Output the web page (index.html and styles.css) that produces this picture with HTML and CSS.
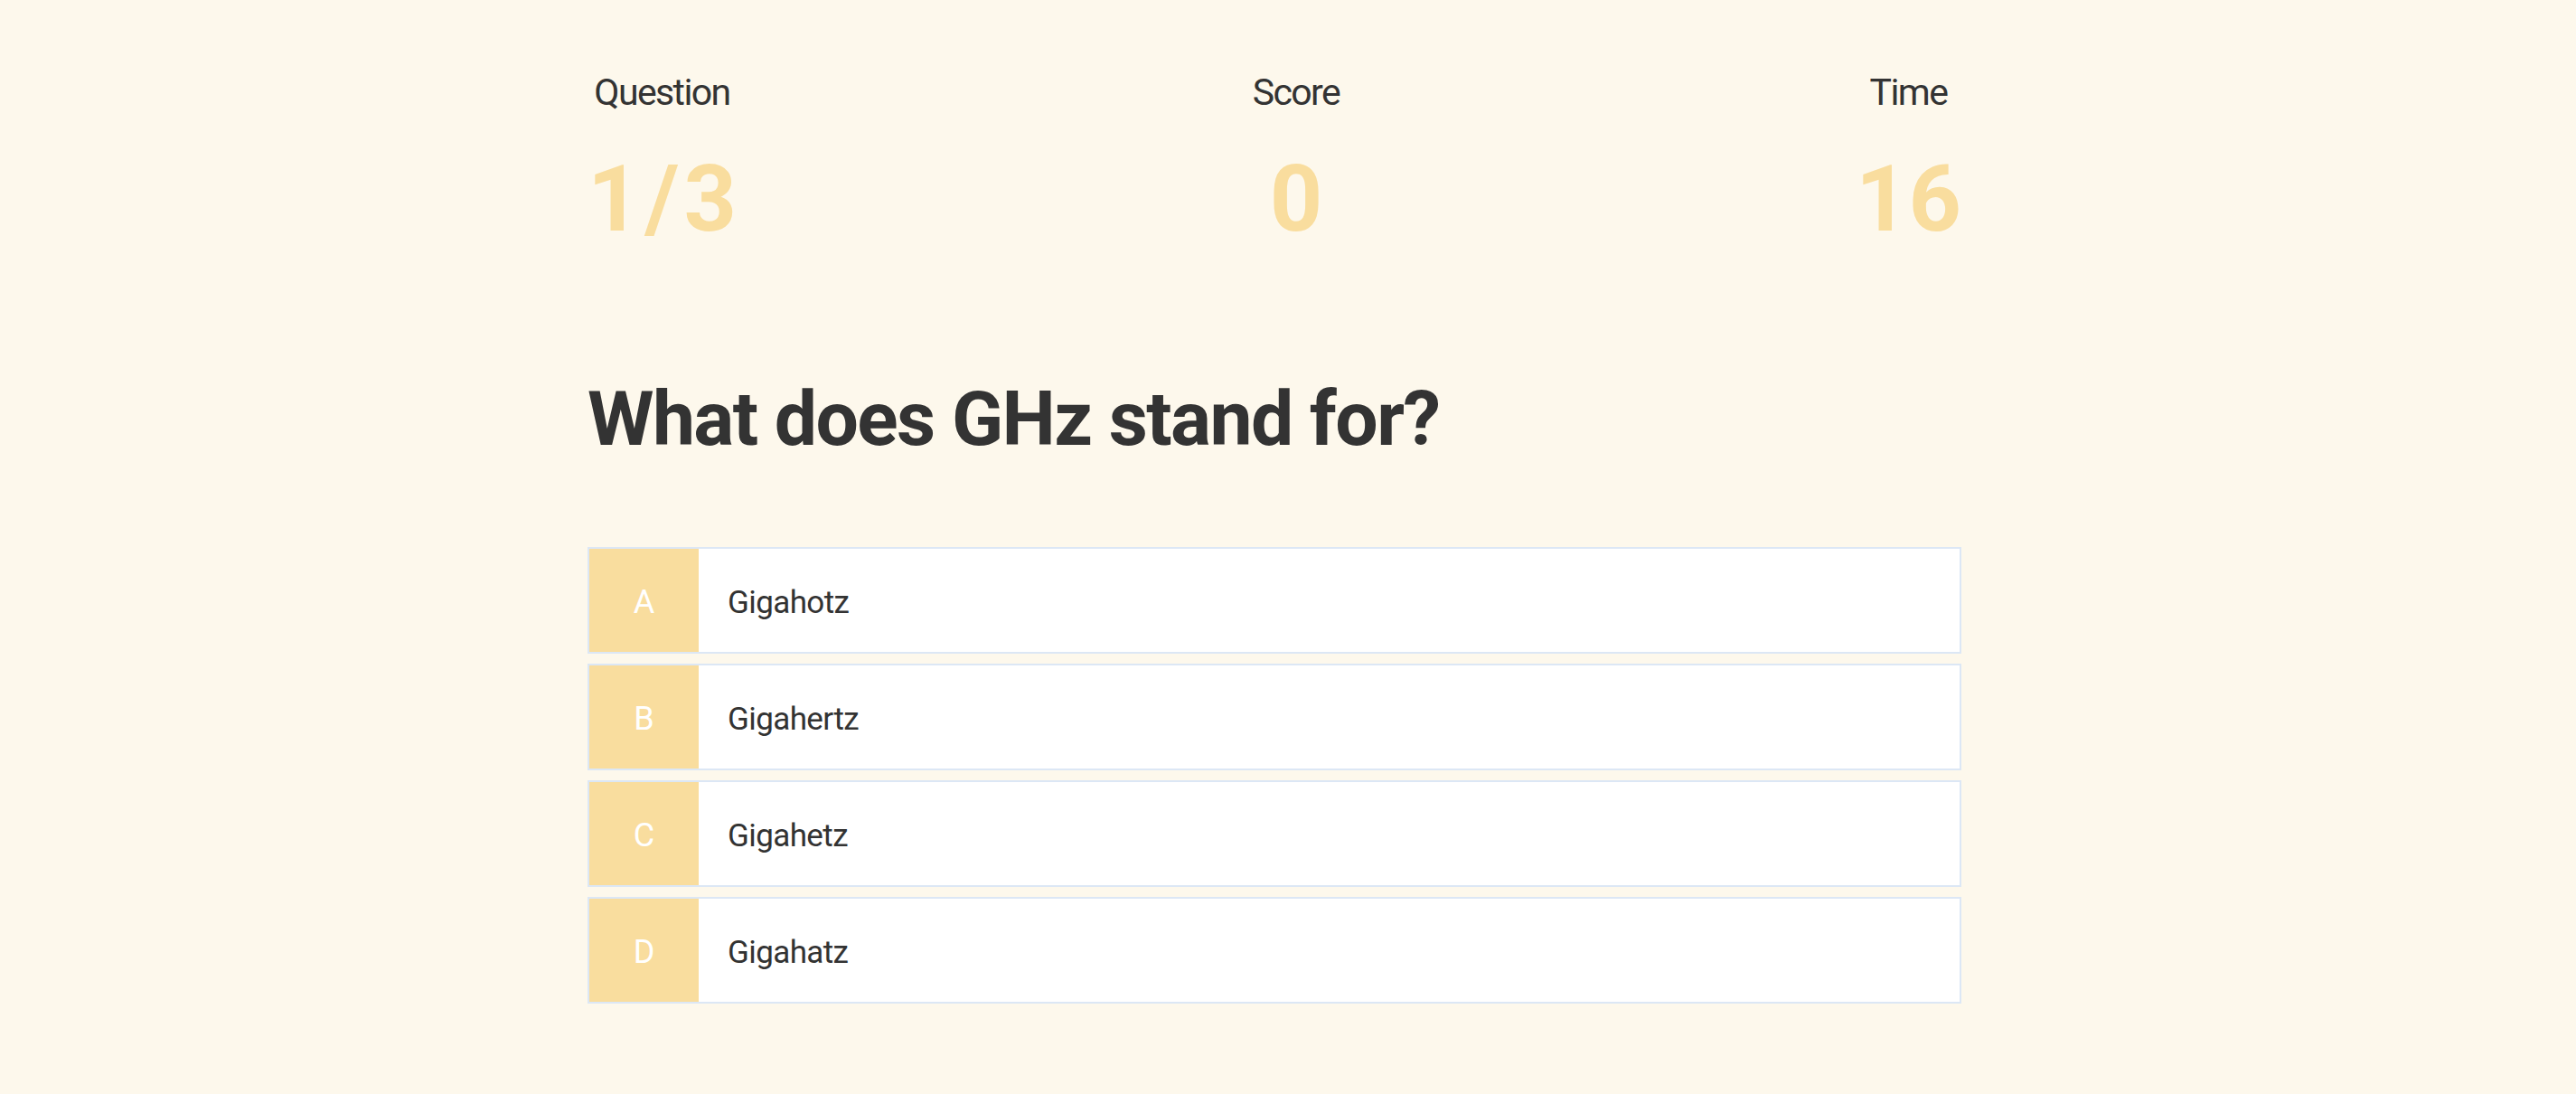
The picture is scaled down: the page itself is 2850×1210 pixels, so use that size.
FILE: index.html
```html
<!DOCTYPE html>
<html lang="en">
<head>
<meta charset="utf-8">
<title>Quiz</title>
<link rel="stylesheet" href="styles.css">
</head>
<body>
<main class="quiz">
  <section class="stats">
    <div class="stat">
      <div class="stat-label">Question</div>
      <div class="stat-value">1<span class="slash">/</span>3</div>
    </div>
    <div class="stat">
      <div class="stat-label">Score</div>
      <div class="stat-value">0</div>
    </div>
    <div class="stat">
      <div class="stat-label">Time</div>
      <div class="stat-value">16</div>
    </div>
  </section>

  <h1 class="question">What does GHz stand for?</h1>

  <ul class="choices">
    <li class="choice"><span class="choice-letter">A</span><span class="choice-text">Gigahotz</span></li>
    <li class="choice"><span class="choice-letter">B</span><span class="choice-text">Gigahertz</span></li>
    <li class="choice"><span class="choice-letter">C</span><span class="choice-text">Gigahetz</span></li>
    <li class="choice"><span class="choice-letter">D</span><span class="choice-text">Gigahatz</span></li>
  </ul>
</main>
</body>
</html>
```

FILE: styles.css
```css
html, body {
  margin: 0;
  padding: 0;
}

body {
  background: #fdf8ec;
  color: #333333;
  font-family: Roboto, "Liberation Sans", sans-serif;
  min-height: 1210px;
}

.quiz {
  width: 1520px;
  margin-left: 650px;
  padding-top: 82px;
}

.stats {
  display: flex;
  justify-content: space-between;
}

.stat {
  display: flex;
  flex-direction: column;
  align-items: center;
}

.stat-label {
  font-size: 41px;
  line-height: 41px;
  font-weight: 400;
  letter-spacing: -1.6px;
  color: #333333;
}

.stat-value {
  margin-top: 46px;
  font-size: 102px;
  line-height: 102px;
  font-weight: 700;
  color: #f9dd9e;
}

.slash {
  margin: 0 5px;
}

.question {
  margin: 151px 0 0 0;
  font-size: 84px;
  line-height: 84px;
  font-weight: 700;
  letter-spacing: -1.6px;
  color: #333333;
}

.choices {
  list-style: none;
  margin: 99px 0 0 0;
  padding: 0;
  display: flex;
  flex-direction: column;
  gap: 11px;
}

.choice {
  display: flex;
  align-items: stretch;
  height: 114px;
  background: #ffffff;
  border: 2px solid #dce7f5;
}

.choice-letter {
  width: 121px;
  flex: none;
  display: flex;
  align-items: center;
  justify-content: center;
  background: #f9dd9e;
  color: #ffffff;
  font-size: 36px;
  padding-top: 3px;
}

.choice-text {
  display: flex;
  align-items: center;
  padding-left: 32px;
  padding-top: 4px;
  font-size: 35px;
  letter-spacing: -0.6px;
  color: #333333;
}
```
